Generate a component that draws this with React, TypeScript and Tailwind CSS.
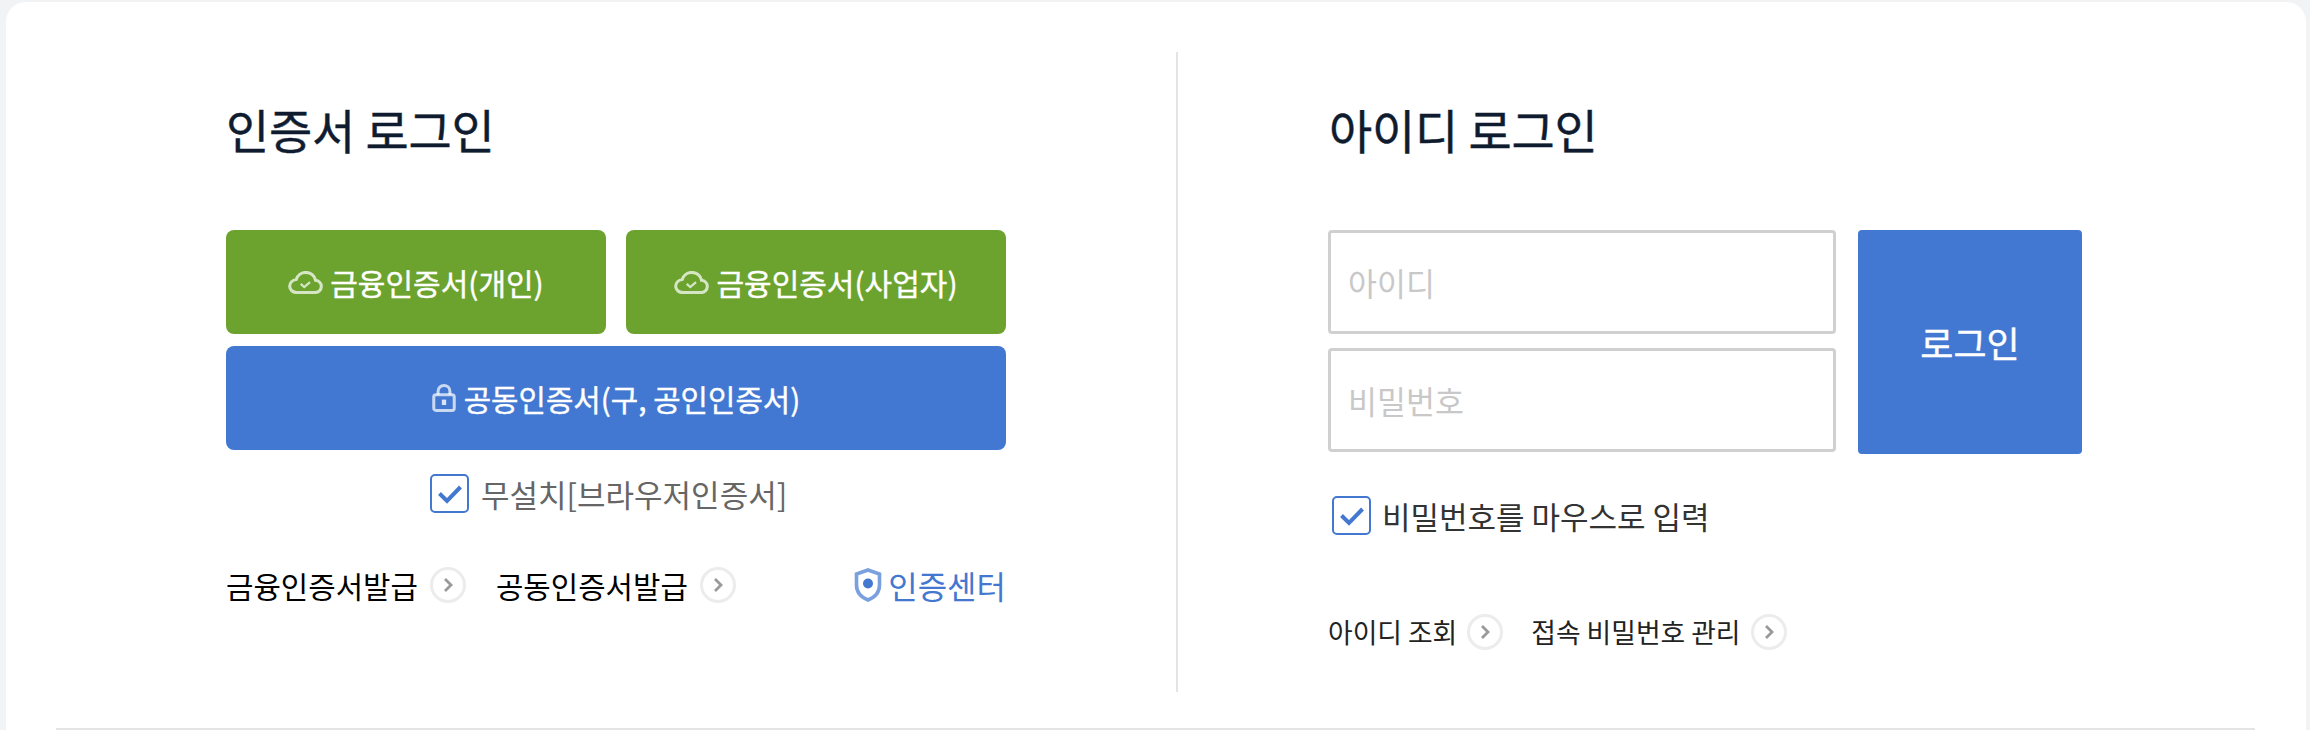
const FONT = "font-['Noto_Sans_CJK_KR','Noto_Sans',sans-serif]"

function CloudIcon() {
  return (
    <svg width="35" height="23" viewBox="0 0 36 24" fill="none" stroke="#fff" strokeOpacity="0.72" strokeWidth="3.200" className="shrink-0">
      <path d="M9 22.500h18.500c3.900 0 7-2.800 7-6.400 0-3.300-2.600-6-6-6.400C27.300 4.700 23.200 1.500 18.300 1.500c-4.700 0-8.700 3-10 7.300C4.400 9.300 1.500 12.300 1.500 15.900c0 3.700 3.300 6.600 7.500 6.600Z" />
      <path d="M13 13.500l3.700 3.200 6-5.200" strokeWidth="2.400" />
    </svg>
  )
}

function LockIcon() {
  return (
    <svg width="24" height="28" viewBox="0 0 22 26" fill="none" stroke="#fff" strokeOpacity="0.72" strokeWidth="2.800" className="shrink-0">
      <rect x="1.500" y="10" width="19" height="14.500" rx="2" />
      <path d="M5.500 10V6.800C5.500 3.700 8 1.500 11 1.500s5.500 2.200 5.500 5.300V10" />
      <rect x="9" y="14.500" width="4" height="5" fill="#fff" fillOpacity="0.8" stroke="none" />
    </svg>
  )
}

function ShieldIcon() {
  return (
    <svg width="28" height="34" viewBox="0 0 28 34" fill="none" className="shrink-0">
      <path d="M14 2l11.500 4v11c0 7.500-5 12.500-11.500 15C7.500 29.500 2.500 24.500 2.500 17V6L14 2Z" stroke="#7ba0de" strokeWidth="3.600" />
      <circle cx="14" cy="15.500" r="5" fill="#4478d0" />
    </svg>
  )
}

function CheckBox() {
  return (
    <span className="flex h-[39px] w-[39px] shrink-0 items-center justify-center rounded-[5px] border-2 border-[#4478d0] bg-white">
      <svg width="26" height="20" viewBox="0 0 26 20" fill="none">
        <path d="M2.500 9.500l7.500 7.500L23.500 3" stroke="#4478d0" strokeWidth="4" />
      </svg>
    </span>
  )
}

function Arrow() {
  return (
    <span className="flex h-[36px] w-[36px] shrink-0 items-center justify-center rounded-full border-[3px] border-[#ececec] bg-white">
      <svg width="12" height="16" viewBox="0 0 12 16" fill="none">
        <path d="M3 2l6 6-6 6" stroke="#999" strokeWidth="2.800" />
      </svg>
    </span>
  )
}

function LinkItem({ label, className }: { label: string; className: string }) {
  return (
    <a className={`flex items-center ${className}`}>
      <span>{label}</span>
      <Arrow />
    </a>
  )
}

export default function App() {
  return (
    <div className={`h-[730px] w-[2310px] overflow-hidden bg-[#f1f3f5] pl-[6px] pr-[4px] pt-[2px] ${FONT}`}>
      <div className="flex h-[728px] flex-col rounded-t-[20px] bg-white">
        <div className="mt-[50px] flex h-[640px]">
          {/* certificate login */}
          <section className="w-[1172px] border-r-2 border-[#e4e4e4] pl-[220px]">
            <div className="w-[780px]">
              <h2 className="mt-[47px] h-[60px] text-[47px] leading-[60px] font-normal tracking-[-0.2px] text-[#0f1c30] [-webkit-text-stroke:0.4px_#0f1c30]">인증서 로그인</h2>
              <div className="mt-[71px] grid grid-cols-2 gap-x-[20px] gap-y-[12px]">
                <button className="flex h-[104px] items-center justify-center gap-[7px] rounded-[8px] bg-[#6ba32e] text-[30px] text-white [-webkit-text-stroke:0.4px_#fff]">
                  <CloudIcon />
                  금융인증서(개인)
                </button>
                <button className="flex h-[104px] items-center justify-center gap-[7px] rounded-[8px] bg-[#6ba32e] text-[30px] text-white [-webkit-text-stroke:0.4px_#fff]">
                  <CloudIcon />
                  금융인증서(사업자)
                </button>
                <button className="col-span-2 flex h-[104px] items-center justify-center gap-[8px] rounded-[8px] bg-[#4278d1] text-[29.800px] text-white [-webkit-text-stroke:0.4px_#fff]">
                  <LockIcon />
                  공동인증서(구, 공인인증서)
                </button>
              </div>
              <label className="mt-[24px] ml-[204px] flex items-center gap-[12px] text-[31px] leading-[39px] text-[#666]">
                <CheckBox />
                무설치[브라우저인증서]
              </label>
              <div className="mt-[54px] flex h-[36px] items-center text-[29.800px] leading-[36px] text-black">
                <LinkItem label="금융인증서발급" className="gap-[12px]" />
                <LinkItem label="공동인증서발급" className="ml-[30px] gap-[12px]" />
                <a className="ml-auto flex items-center gap-[6px] text-[32px] text-[#4478d0]">
                  <ShieldIcon />
                  인증센터
                </a>
              </div>
            </div>
          </section>

          {/* id login */}
          <section className="pl-[150px]">
            <h2 className="mt-[47px] ml-[1px] h-[60px] text-[47px] leading-[60px] font-normal tracking-[-0.2px] text-[#0f1c30] [-webkit-text-stroke:0.4px_#0f1c30]">아이디 로그인</h2>
            <div className="mt-[71px] flex gap-[22px]">
              <div className="flex w-[508px] flex-col gap-[14px]">
                <input placeholder="아이디" className="h-[104px] rounded-[4px] border-[3px] border-[#d0d0d0] bg-white pl-[17px] text-[31.500px] outline-none placeholder:text-[#c8c8c8]" />
                <input placeholder="비밀번호" className="h-[104px] rounded-[4px] border-[3px] border-[#d0d0d0] bg-white pl-[17px] text-[31.500px] outline-none placeholder:text-[#c8c8c8]" />
              </div>
              <button className="h-[224px] w-[224px] rounded-[4px] bg-[#4278d1] text-[36px] text-white [-webkit-text-stroke:0.4px_#fff]">로그인</button>
            </div>
            <label className="mt-[42px] ml-[4px] flex items-center gap-[11px] text-[31px] leading-[39px] text-[#333]">
              <CheckBox />
              비밀번호를 마우스로 입력
            </label>
            <div className="mt-[79px] flex h-[36px] items-center text-[26.800px] leading-[36px] text-[#222]">
              <LinkItem label="아이디 조회" className="gap-[10px]" />
              <LinkItem label="접속 비밀번호 관리" className="ml-[28px] gap-[10px]" />
            </div>
          </section>
        </div>
        <div className="mt-[36px] ml-[50px] mr-[51px] h-[2px] shrink-0 bg-[#e4e4e4]" />
      </div>
    </div>
  )
}
